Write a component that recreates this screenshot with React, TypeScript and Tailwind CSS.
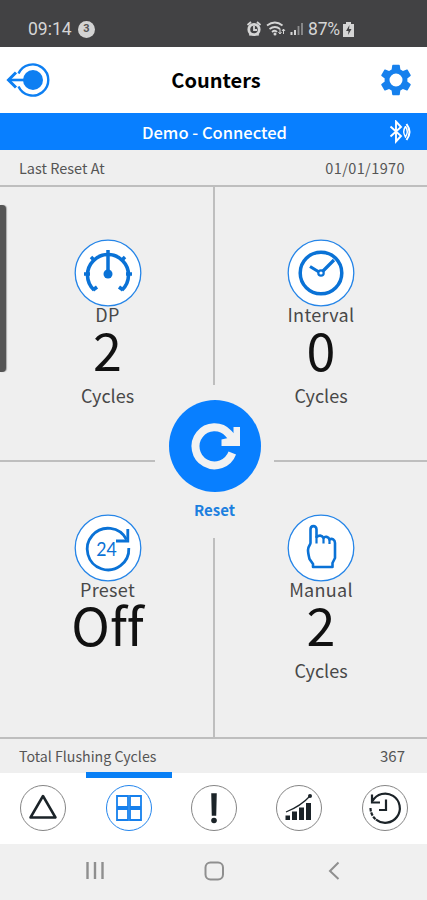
import React from 'react';

const blue = '#0a72d6';

function Badge({ children }: { children: React.ReactNode }) {
  return (
    <svg className="block h-[68px] w-[68px] shrink-0" viewBox="-34 -34 68 68" fill="none" stroke={blue} strokeWidth="3">
      <circle r="32.8" fill="#fff" stroke="#2585e8" strokeWidth="1.3" />
      {children}
    </svg>
  );
}

function Cell({ icon, label, value, unit }: { icon: React.ReactNode; label: string; value: string; unit?: string }) {
  return (
    <div className="flex flex-col items-center pt-[52px]">
      {icon}
      <div className="-mt-[2px] h-[19px] text-[18px] leading-[19px] tracking-[0.3px] text-[#484848]">{label}</div>
      <div className="-mt-[3px] h-[56px] text-[52px] leading-[56px] text-[#111] [font-variant-ligatures:none]">{value}</div>
      {unit && <div className="mt-[6px] h-[24px] text-[18px] leading-[24px] text-[#484848]">{unit}</div>}
    </div>
  );
}

function Tab({ active, children }: { active?: boolean; children: React.ReactNode }) {
  return (
    <div className="relative flex flex-1 justify-center pt-[11px] pl-px">
      {active && <div className="absolute -top-px left-[1px] h-[6px] w-full bg-[#087ff5]" />}
      <svg className="h-[48px] w-[48px]" viewBox="-24 -24 48 48" fill="none" stroke="#1b2328" strokeWidth="2">
        <circle r="22.5" fill="#fff" stroke={active ? '#2385ed' : '#858585'} strokeWidth="1" />
        {children}
      </svg>
    </div>
  );
}

export default function App() {
  return (
    <div className="flex h-[900px] w-[427px] flex-col overflow-hidden bg-[#efefef] font-['Noto_Sans_CJK_SC','Noto_Sans',sans-serif]">
      <div className="flex h-[47px] shrink-0 items-center bg-[#424244] pt-[11px] pl-[28px] text-[#d5d5d5] font-['Roboto',sans-serif]">
        <span className="w-[45px] text-[17.5px] leading-[20px]">09:14</span>
        <span className="ml-[5px] flex h-[17px] w-[17px] items-center justify-center rounded-full bg-[#d3d3d3] text-[11px] font-bold text-[#555]">3</span>
        <svg className="ml-[151px] h-[18px] w-[62px]" viewBox="0 0 62 18" fill="none" stroke="#d5d5d5" strokeWidth="1.5">
          <circle cx="8" cy="9.5" r="5.2" strokeWidth="2.8" />
          <path d="M1.5 5 5 2M14.5 5 11 2M3.5 15.500l1.5-2M12.5 15.500 11 13.500M8 6v4h3" strokeWidth="1.800" />
          <path d="M21 5.5q8-6 15.5 0M23.5 9q5.500-4 10.500 0M26 12q3-2.500 5 0" strokeWidth="1.8" />
          <circle cx="29" cy="14" r="1.500" fill="#d5d5d5" stroke="none" />
          <path d="M34 9v5M32.500 12l1.500 2 1.500-2M37.500 14V9M36 11l1.500-2 1.500 2" strokeWidth="1" />
          <path d="M45.500 15v-3M49 15v-5" strokeWidth="2" />
          <path d="M52.500 15V6M56 15V3" stroke="#8e8e8f" strokeWidth="1.800" />
        </svg>
        <span className="w-[34px] text-[17.5px] leading-[20px] whitespace-nowrap tracking-[-0.2px]">87%</span>
        <svg className="ml-px h-[15px] w-[11px]" viewBox="0 0 11 15">
          <path d="M3 0h5v2h3v13H0V2h3z" fill="#d5d5d5" />
          <path d="M6.500 3 3 9h2.500L5 13l3.500-6H6z" fill="#424244" />
        </svg>
      </div>

      <header className="flex h-[66px] shrink-0 items-center bg-white pl-[6px] pr-[12px]">
        <svg className="h-[36px] w-[46px]" viewBox="0 0 46 36" fill="none" stroke="#0d7ff2">
          <path d="M12.500 11.500A15.600 15.600 0 1 1 12.500 24.500" strokeWidth="2.400" />
          <circle cx="27" cy="18" r="10" fill="#0d7ff2" stroke="none" />
          <path d="M2 18H22" strokeWidth="2.600" />
          <path d="M10 10.500 2.500 18l7.500 7.500" strokeWidth="3" />
        </svg>
        <h1 className="flex-1 pl-[3px] text-center text-[20px] leading-[28px] font-bold text-black">Counters</h1>
        <svg className="h-[38px] w-[38px]" viewBox="0 0 24 24" fill="#1680ed">
          <path fillRule="evenodd" d="M19.140 12.940c.04-.3.060-.61.060-.94 0-.32-.02-.64-.07-.94l2.030-1.580c.18-.14.230-.41.120-.61l-1.920-3.320c-.12-.22-.37-.29-.59-.22l-2.390.96c-.5-.38-1.030-.7-1.620-.94l-.36-2.540c-.04-.24-.24-.41-.48-.41h-3.840c-.24 0-.43.170-.47.410l-.36 2.540c-.59.240-1.130.57-1.620.94l-2.390-.96c-.22-.08-.47 0-.59.220L2.740 8.870c-.12.210-.08.470.12.610l2.030 1.580c-.05.300-.09.630-.09.940s.02.640.07.940l-2.030 1.580c-.18.140-.23.410-.12.610l1.920 3.320c.12.220.37.290.59.220l2.390-.96c.5.380 1.030.7 1.620.94l.36 2.540c.05.240.24.410.48.410h3.840c.24 0 .44-.17.47-.41l.36-2.540c.59-.24 1.130-.56 1.620-.94l2.390.96c.22.080.47 0 .59-.22l1.920-3.320c.12-.22.070-.47-.12-.61zM12 16.100a4.100 4.100 0 1 1 0-8.200 4.100 4.100 0 0 1 0 8.200z" />
        </svg>
      </header>

      <div className="flex h-[37px] shrink-0 items-center bg-[#087fff] pl-[39px] pr-[14px] text-white">
        <span className="flex-1 pl-[2px] text-center text-[16.5px] leading-[24px] font-medium">Demo - Connected</span>
        <svg className="h-[24px] w-[25px]" viewBox="0 0 25 24" fill="none" stroke="#fff" strokeWidth="1.900">
          <path d="M2.500 6.500 13 16l-5 5.500V1.500L13 7 2.500 16.500" />
          <path d="M17.500 6.500q-3.500 5 0 10.500 3.500-5.500 0-10.500" strokeWidth="1.400" />
          <path d="M18.500 4q6 8 0 16" strokeWidth="2" />
        </svg>
      </div>

      <div className="flex h-[37px] shrink-0 items-center justify-between border-b-2 border-[#bebebe] pr-[22px] pl-[19px] text-[14.5px] leading-[20px] text-[#555]">
        <span>Last Reset At</span>
        <span className="tracking-[0.4px]">01/01/1970</span>
      </div>

      <main className="relative grid h-[550px] shrink-0 grid-cols-[215px_212px] grid-rows-[275px_275px]">
        <div className="border-r-2 border-b-2 border-[#bebebe] pl-[2px]">
          <Cell label="DP" value="2" unit="Cycles" icon={
            <Badge>
              <path d="M-14 17A20.500 20.500 0 1 1 14 17" strokeWidth="3.600" />
              <path d="M0-23V1M-24 1h6M18 1h6M-17-16l4 4M17-16l-4 4M-15 17l4-3M15 17l-4-3" strokeWidth="3.500" />
              <circle cy="1" r="4.500" fill={blue} stroke="none" />
            </Badge>
          } />
        </div>
        <div className="border-b-2 border-[#bebebe]">
          <Cell label="Interval" value="0" unit="Cycles" icon={
            <Badge>
              <circle r="20.800" strokeWidth="3.500" />
              <circle r="2.700" strokeWidth="2.200" />
              <path d="M-2-1-11-6.500M2-2 13-13" strokeWidth="3.200" />
            </Badge>
          } />
        </div>
        <div className="border-r-2 border-[#bebebe] pl-[2px]">
          <Cell label="Preset" value="Off" icon={
            <Badge>
              <path d="M20.800 0A20.800 20.800 0 1 1 18.500-8.500" strokeWidth="2.800" />
              <path d="M19.800-19V-7H8" strokeWidth="2.800" />
              <text x="-1.500" y="8" textAnchor="middle" fill={blue} stroke="none" textLength="20.500" lengthAdjust="spacingAndGlyphs" className="font-['Lato',sans-serif] text-[19px]">24</text>
            </Badge>
          } />
        </div>
        <div>
          <Cell label="Manual" value="2" unit="Cycles" icon={
            <Badge>
              <path d="M-8 19V16L-11.500 11C-12.500 7-13 4-13 2-13-2-10.500-3-10.500-5V-18.500C-10.500-23-4.500-23-4.500-18.500V-11C-2-13 1-13 2.500-10 4-12 7.500-11.500 8.500-8.500 11-10 14-8.500 14-5V10L11.500 15V19Z" strokeLinejoin="round" strokeWidth="2.600" />
              <path d="M-4.500-12V-4.500M2.500-10V-4.500M8.500-9V-4" strokeWidth="2.200" />
            </Badge>
          } />
        </div>

        <div className="absolute top-[198px] left-[155px] flex h-[153px] w-[119px] flex-col items-center bg-[#efefef] pt-[15px]">
          <svg className="h-[92px] w-[92px]" viewBox="-46 -46 92 92">
            <circle r="46" fill="#087fff" />
            <path d="M17.300 7A19 19 0 1 1 13.500-12.500L17-8.500" fill="none" stroke="#f2f2f2" strokeWidth="8" />
            <path d="M18.500-19H25V0H6.500V-6.500L13-8 18.500-13Z" fill="#f2f2f2" />
          </svg>
          <span className="mt-[7px] text-[15px] leading-[22px] font-bold text-[#1c7fdf]">Reset</span>
        </div>
        <div className="absolute top-[18px] left-0 h-[167px] w-[6px] rounded-r-[4px] bg-[#555] shadow-[1px_0_1px_#aaa]" />
      </main>

      <div className="flex h-[36px] shrink-0 items-center justify-between border-t-2 border-[#bebebe] pr-[22px] pl-[19px] text-[14.2px] leading-[20px] text-[#555]">
        <span>Total Flushing Cycles</span>
        <span className="text-[15px]">367</span>
      </div>

      <nav className="flex h-[71px] shrink-0 bg-white">
        <Tab><path d="M0-12 12.500 9.500h-25Z" strokeWidth="2.500" strokeLinejoin="round" /></Tab>
        <Tab active>
          <path d="M-12-12h11v11h-11ZM1-12h11V-1H1ZM-12 1h11v11h-11ZM1 1h11v11H1Z" stroke="#1680ed" strokeWidth="1.800" />
        </Tab>
        <Tab>
          <path d="M-2-14h4L1.500 7h-3Z" fill="#1b2328" strokeWidth="1.500" />
          <circle cy="12.500" r="2.800" fill="#1b2328" stroke="none" />
        </Tab>
        <Tab>
          <path d="M-13.500 12V7.500h4.500V12ZM-7 12V3.500h5V12ZM0 12V-.5h5V12ZM7 12V-5h5v17Z" fill="#1b2328" stroke="none" />
          <path d="M-13 4Q2-2 11-12" strokeWidth="1.200" />
          <circle cx="11" cy="-12" r="2" fill="#1b2328" stroke="none" />
        </Tab>
        <Tab>
          <path d="M-14.500 0A14.600 14.600 0 0 0-9 11.500" strokeWidth="2.200" strokeDasharray="3.500 1" />
          <path d="M-9 11.500A14.600 14.600 0 1 0-12.500-7" strokeWidth="2.200" />
          <path d="M-13-13.500v8h8M1-8.500V2h-7" strokeWidth="2.200" />
        </Tab>
      </nav>

      <div className="h-[56px] shrink-0 bg-[#f0f0f0]">
        <svg className="h-[56px] w-[427px]" viewBox="0 0 427 56" fill="none" stroke="#8f8f8f" strokeWidth="2">
          <path d="M87.500 18v17M95 18v17M102.500 18v17" strokeWidth="2.400" />
          <rect x="205.500" y="18.500" width="17.500" height="17" rx="5" />
          <path d="M338.500 18.500 330 27l8.500 8" />
        </svg>
      </div>
    </div>
  );
}
